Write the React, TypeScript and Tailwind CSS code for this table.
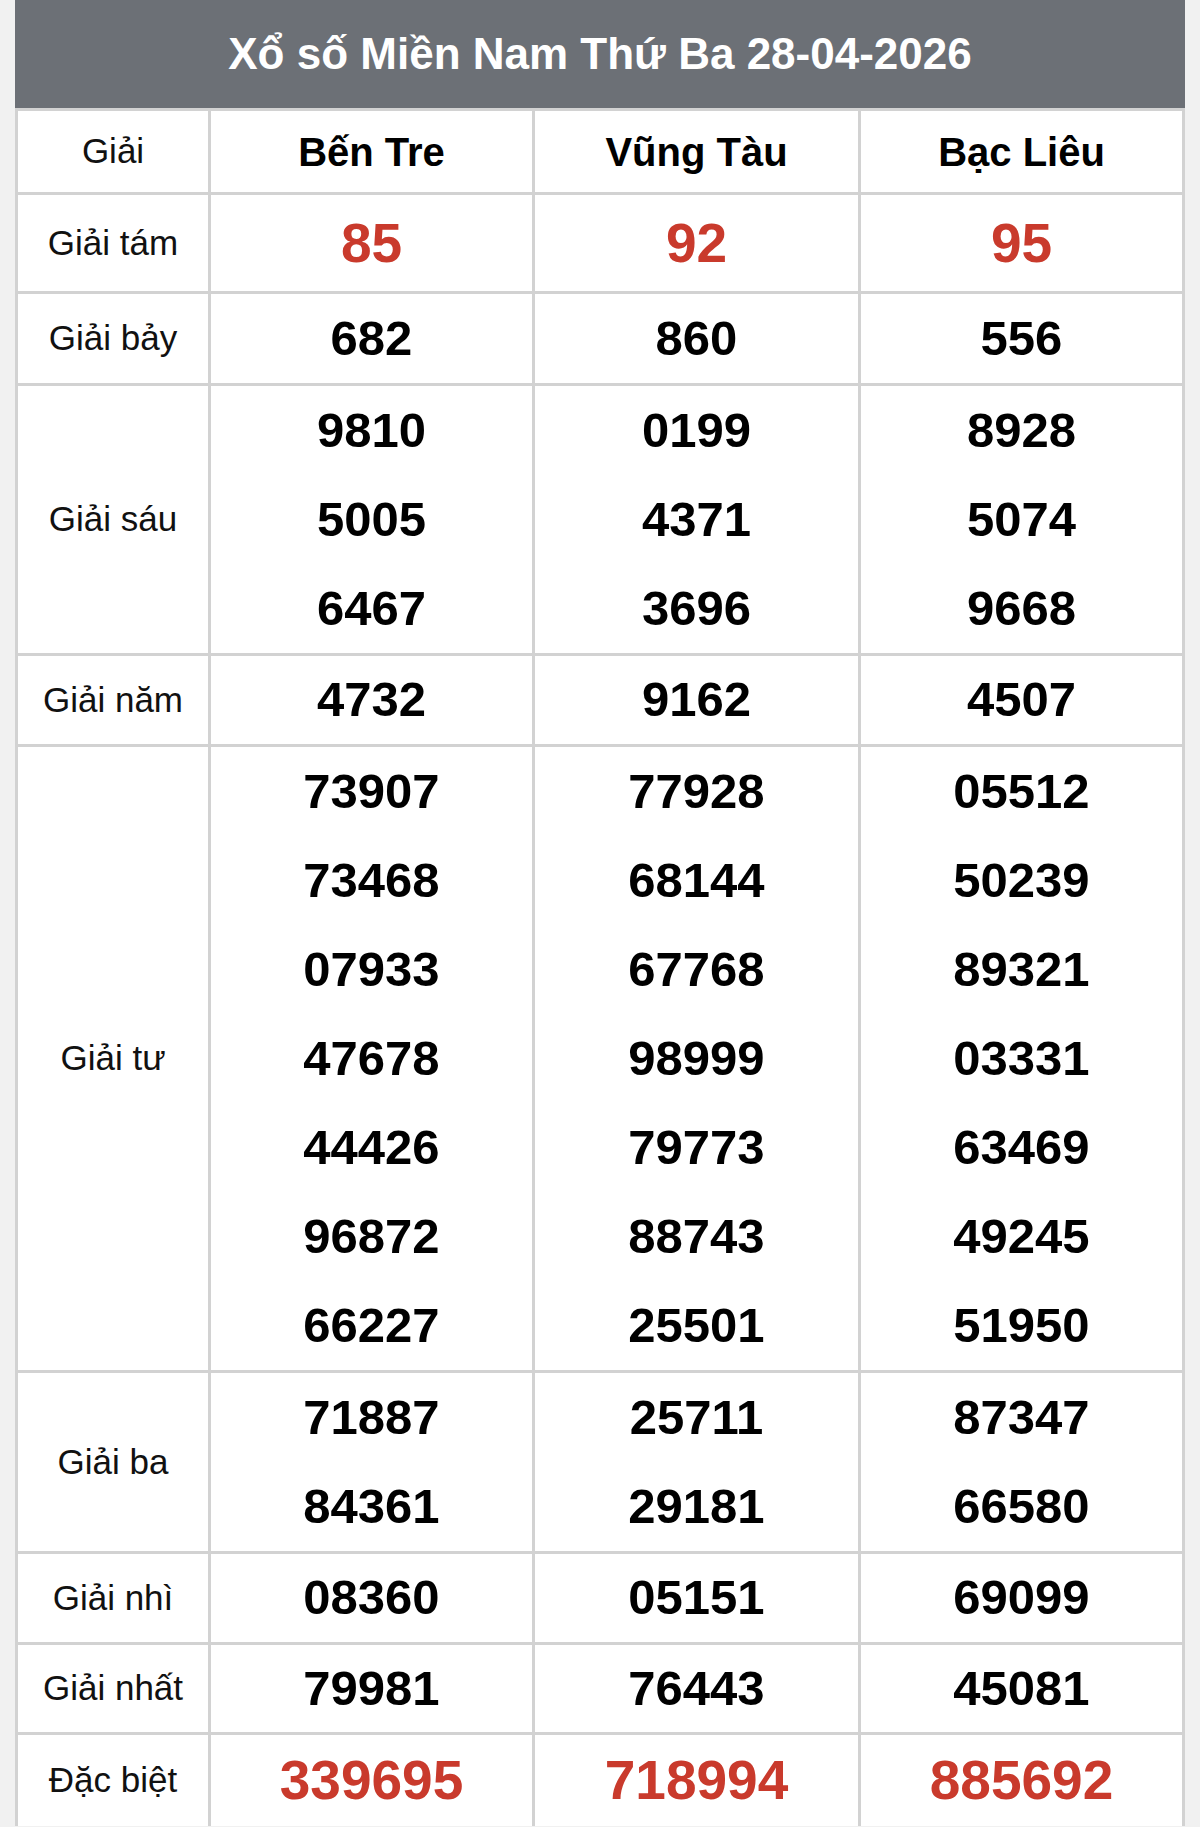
const provinces = ["Bến Tre", "Vũng Tàu", "Bạc Liêu"];

type Row = {
  label: string;
  values: string[][];
  red?: boolean;
  height?: string;
};

const rows: Row[] = [
  { label: "Giải tám", values: [["85"], ["92"], ["95"]], red: true, height: "h-[96px]" },
  { label: "Giải bảy", values: [["682"], ["860"], ["556"]], height: "h-[89px]" },
  {
    label: "Giải sáu",
    values: [
      ["9810", "5005", "6467"],
      ["0199", "4371", "3696"],
      ["8928", "5074", "9668"],
    ],
  },
  { label: "Giải năm", values: [["4732"], ["9162"], ["4507"]] },
  {
    label: "Giải tư",
    values: [
      ["73907", "73468", "07933", "47678", "44426", "96872", "66227"],
      ["77928", "68144", "67768", "98999", "79773", "88743", "25501"],
      ["05512", "50239", "89321", "03331", "63469", "49245", "51950"],
    ],
  },
  {
    label: "Giải ba",
    values: [
      ["71887", "84361"],
      ["25711", "29181"],
      ["87347", "66580"],
    ],
  },
  { label: "Giải nhì", values: [["08360"], ["05151"], ["69099"]] },
  { label: "Giải nhất", values: [["79981"], ["76443"], ["45081"]], height: "h-[87px]" },
  { label: "Đặc biệt", values: [["339695"], ["718994"], ["885692"]], red: true, height: "h-[91px]" },
];

function NumberCell({ lines, red, height }: { lines: string[]; red?: boolean; height?: string }) {
  const lineHeight = height ?? (lines.length === 1 ? "h-[88px]" : "h-[89px]");
  return (
    <div className="flex flex-col bg-white">
      {lines.map((n, i) => (
        <div
          key={i}
          className={
            red
              ? `${lineHeight} flex items-center justify-center text-[55px] font-bold text-[#c93a2c]`
              : `${lineHeight} flex items-center justify-center text-[49px] font-bold text-black`
          }
        >
          {n}
        </div>
      ))}
    </div>
  );
}

export default function App() {
  return (
    <div
      className="h-[1827px] overflow-hidden bg-[#f1f1f1] px-[15px]"
      style={{ fontFamily: '"Liberation Sans", Arial, sans-serif' }}
    >
      <div className="flex h-[108px] items-center justify-center bg-[#6c7076] text-[44px] font-bold text-white">
        Xổ số Miền Nam Thứ Ba 28-04-2026
      </div>
      <div className="grid grid-cols-[190px_321px_323px_321px] gap-[3px] bg-[#d2d2d2] px-[3px] pt-[3px]">
        <div className="flex h-[81px] items-center justify-center bg-white text-[35px] text-[#111]">Giải</div>
        {provinces.map((p) => (
          <div key={p} className="flex h-[81px] items-center justify-center bg-white text-[40px] font-bold text-black">
            {p}
          </div>
        ))}
        {rows.map((row) => (
          <>
            <div
              key={row.label}
              className="flex items-center justify-center bg-white text-[35px] text-[#111]"
            >
              {row.label}
            </div>
            {row.values.map((lines, i) => (
              <NumberCell key={row.label + i} lines={lines} red={row.red} height={row.height} />
            ))}
          </>
        ))}
      </div>
    </div>
  );
}
